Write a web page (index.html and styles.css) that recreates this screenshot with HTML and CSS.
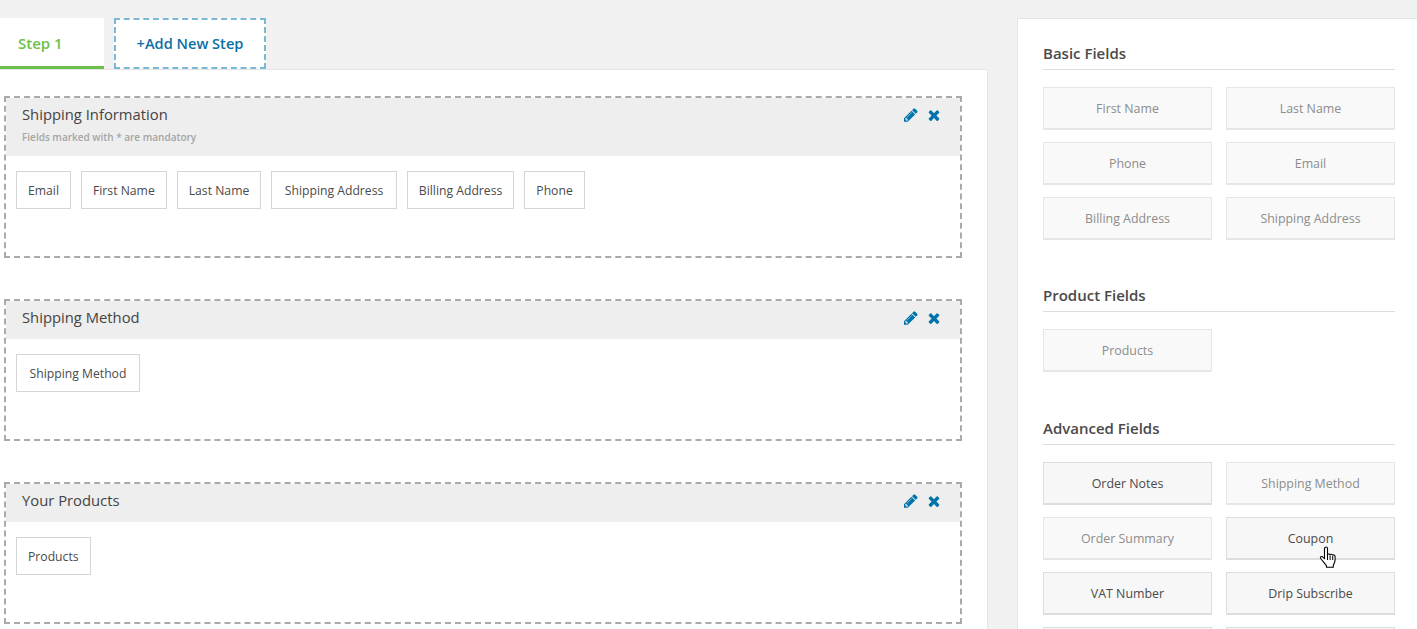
FILE: index.html
```html
<!DOCTYPE html>
<html lang="en">
<head>
<meta charset="utf-8">
<title>Step builder</title>
<link rel="stylesheet" href="styles.css">
</head>
<body>
<div class="page">
  <main class="builder">
    <nav class="tabs">
      <a class="tab tab-active">Step 1</a>
      <a class="tab tab-add">+Add New Step</a>
    </nav>
    <div class="panel">
      <section class="sec">
        <header class="sec-head sec-head-tall">
          <div class="sec-text">
            <h3 class="sec-title">Shipping Information</h3>
            <p class="sec-sub">Fields marked with * are mandatory</p>
          </div>
          <div class="sec-icons">
            <svg class="ic-edit" viewBox="0 0 1792 1792"><path d="M363 1536l91-91-235-235-91 91v107h128v128h107zm523-928q0-22-22-22-10 0-17 7l-542 542q-7 7-7 17 0 22 22 22 10 0 17-7l542-542q7-7 7-17zm-54-192l416 416-832 832h-416v-416zm683 96q0 53-37 90l-166 166-416-416 166-165q36-38 90-38 53 0 91 38l235 234q37 39 37 91z"/></svg>
            <svg class="ic-close" viewBox="0 0 1408 1792"><path d="M1298 1322q0 40-28 68l-136 136q-28 28-68 28t-68-28l-294-294-294 294q-28 28-68 28t-68-28l-136-136q-28-28-28-68t28-68l294-294-294-294q-28-28-28-68t28-68l136-136q28-28 68-28t68 28l294 294 294-294q28-28 68-28t68 28l136 136q28 28 28 68t-28 68l-294 294 294 294q28 28 28 68z"/></svg>
          </div>
        </header>
        <div class="chips">
          <span class="chip">Email</span><span class="chip">First Name</span><span class="chip">Last Name</span><span class="chip chip-long">Shipping Address</span><span class="chip">Billing Address</span><span class="chip">Phone</span>
        </div>
      </section>
      <section class="sec">
        <header class="sec-head">
          <div class="sec-text"><h3 class="sec-title">Shipping Method</h3></div>
          <div class="sec-icons">
            <svg class="ic-edit" viewBox="0 0 1792 1792"><path d="M363 1536l91-91-235-235-91 91v107h128v128h107zm523-928q0-22-22-22-10 0-17 7l-542 542q-7 7-7 17 0 22 22 22 10 0 17-7l542-542q7-7 7-17zm-54-192l416 416-832 832h-416v-416zm683 96q0 53-37 90l-166 166-416-416 166-165q36-38 90-38 53 0 91 38l235 234q37 39 37 91z"/></svg>
            <svg class="ic-close" viewBox="0 0 1408 1792"><path d="M1298 1322q0 40-28 68l-136 136q-28 28-68 28t-68-28l-294-294-294 294q-28 28-68 28t-68-28l-136-136q-28-28-28-68t28-68l294-294-294-294q-28-28-28-68t28-68l136-136q28-28 68-28t68 28l294 294 294-294q28-28 68-28t68 28l136 136q28 28 28 68t-28 68l-294 294 294 294q28 28 28 68z"/></svg>
          </div>
        </header>
        <div class="chips"><span class="chip chip-long">Shipping Method</span></div>
      </section>
      <section class="sec">
        <header class="sec-head">
          <div class="sec-text"><h3 class="sec-title">Your Products</h3></div>
          <div class="sec-icons">
            <svg class="ic-edit" viewBox="0 0 1792 1792"><path d="M363 1536l91-91-235-235-91 91v107h128v128h107zm523-928q0-22-22-22-10 0-17 7l-542 542q-7 7-7 17 0 22 22 22 10 0 17-7l542-542q7-7 7-17zm-54-192l416 416-832 832h-416v-416zm683 96q0 53-37 90l-166 166-416-416 166-165q36-38 90-38 53 0 91 38l235 234q37 39 37 91z"/></svg>
            <svg class="ic-close" viewBox="0 0 1408 1792"><path d="M1298 1322q0 40-28 68l-136 136q-28 28-68 28t-68-28l-294-294-294 294q-28 28-68 28t-68-28l-136-136q-28-28-28-68t28-68l294-294-294-294q-28-28-28-68t28-68l136-136q28-28 68-28t68 28l294 294 294-294q28-28 68-28t68 28l136 136q28 28 28 68t-28 68l-294 294 294 294q28 28 28 68z"/></svg>
          </div>
        </header>
        <div class="chips"><span class="chip">Products</span></div>
      </section>
    </div>
  </main>
  <aside class="side">
    <h4 class="group-title">Basic Fields</h4>
    <div class="grid">
      <button class="fld off">First Name</button><button class="fld off">Last Name</button>
      <button class="fld off">Phone</button><button class="fld off">Email</button>
      <button class="fld off">Billing Address</button><button class="fld off">Shipping Address</button>
    </div>
    <h4 class="group-title">Product Fields</h4>
    <div class="grid grid-single">
      <button class="fld off">Products</button>
    </div>
    <h4 class="group-title">Advanced Fields</h4>
    <div class="grid">
      <button class="fld">Order Notes</button><button class="fld off">Shipping Method</button>
      <button class="fld off">Order Summary</button><button class="fld">Coupon</button>
      <button class="fld">VAT Number</button><button class="fld">Drip Subscribe</button>
      <button class="fld"></button><button class="fld"></button>
    </div>
  </aside>
</div>
<svg class="cursor" viewBox="0 0 20 24"><path d="M6.500 1.200c.9-.6 2 0 2 1.100v6.200c.2-.7 2.300-.9 2.600.3.3-.8 2.300-.8 2.600.4.4-.6 2.100-.4 2.300.8.2 1.600.2 3.400-.1 5.200-.3 1.700-.9 2.800-1.600 4.100v1.900H7.500v-1.400C6 17.800 3.800 15.200 1.700 12.500c-.9-1.300.3-2.500 1.600-1.800L5.500 12.700V2.500c0-.5.4-1 1-1.300z" fill="#fff" stroke="#000" stroke-width="1.100" stroke-linejoin="round"/><path d="M8.500 9v5M11.100 9.500v4.500M13.700 10v4" stroke="#000" stroke-width="1" fill="none"/></svg>
</body>
</html>
```

FILE: styles.css
```css
* { box-sizing: border-box; }
html, body { margin: 0; height: 629px; overflow: hidden; }
body {
  background: #f1f1f1;
  font-family: "Open Sans", "Liberation Sans", sans-serif;
  color: #444;
  position: relative;
}
.page {
  display: flex;
  align-items: flex-start;
  padding-top: 18px;
  height: 629px;
  overflow: hidden;
}
.builder { width: 988px; flex: none; }
.tabs { display: flex; gap: 10px; height: 51px; }
.tab {
  display: flex;
  align-items: center;
  background: #fff;
  font-size: 15px;
  font-weight: 600;
}
.tab-active {
  width: 104px;
  padding: 1px 0 0 18px;
  color: #6cc04a;
  border-bottom: 3px solid #6cc04a;
}
.tab-add {
  width: 152px;
  padding-bottom: 2px;
  justify-content: center;
  font-size: 14.600px;
  color: #0a6fa5;
  border: 2px dashed #7ab8d6;
}
.panel {
  background: #fff;
  border-top: 1px solid #e5e5e5;
  border-right: 1px solid #e5e5e5;
  padding: 26px 25px 0 4px;
  height: 600px;
}
.sec {
  border: 2px dashed #aaa;
  margin-bottom: 41px;
  padding-bottom: 47px;
}
.sec-head {
  display: flex;
  justify-content: space-between;
  background: #eee;
  height: 38px;
  padding: 0 19px 0 16px;
}
.sec-head-tall { height: 58px; }
.sec-text { padding-top: 5px; }
.sec-title {
  margin: 0;
  font-size: 14.800px;
  line-height: 22px;
  font-weight: 400;
  color: #444;
}
.sec-sub {
  margin: 5px 0 0;
  font-size: 10px;
  line-height: 14px;
  font-weight: 600;
  color: #a5a5a5;
}
.sec-icons { display: flex; gap: 7px; padding-top: 9px; align-items: flex-start; }
.ic-edit { width: 16px; height: 16px; fill: #0073aa; }
.ic-close { width: 14px; height: 16px; fill: #0073aa; }
.chips {
  display: flex;
  gap: 10px;
  padding: 15px 0 0 10px;
}
.chip {
  display: flex;
  align-items: center;
  height: 38px;
  padding: 0 11px;
  background: #fff;
  border: 1px solid #d5d5d5;
  font-size: 12.200px;
  color: #4a4a4a;
}
.chip-long { padding: 0 12.500px; }
.side {
  width: 400px;
  margin-left: 29px;
  flex: none;
  background: #fff;
  border: 1px solid #e5e5e5;
  border-right: 0;
  padding: 17px 22px 0 25px;
  height: 640px;
}
.group-title {
  margin: 0 0 17px;
  height: 34px;
  padding-top: 7px;
  font-size: 15px;
  line-height: 20px;
  font-weight: 600;
  color: #4a4a4a;
  border-bottom: 1px solid #ddd;
}
.grid {
  display: grid;
  grid-template-columns: 169px 169px;
  column-gap: 14px;
  row-gap: 12px;
  margin-bottom: 38px;
}
.grid-single { margin-bottom: 39px; }
.fld {
  height: 43px;
  padding: 1px 0 0;
  background: #f7f7f7;
  border: 1px solid #ddd;
  border-bottom-width: 2px;
  font: 12.400px "Open Sans", "Liberation Sans", sans-serif;
  color: #4a4a4a;
  text-align: center;
}
.fld.off {
  background: #f9f9f9;
  border-color: #e6e6e6;
  color: #8c8c8c;
}
.cursor {
  position: absolute;
  left: 1319px;
  top: 546px;
  width: 20px;
  height: 24px;
}
```
